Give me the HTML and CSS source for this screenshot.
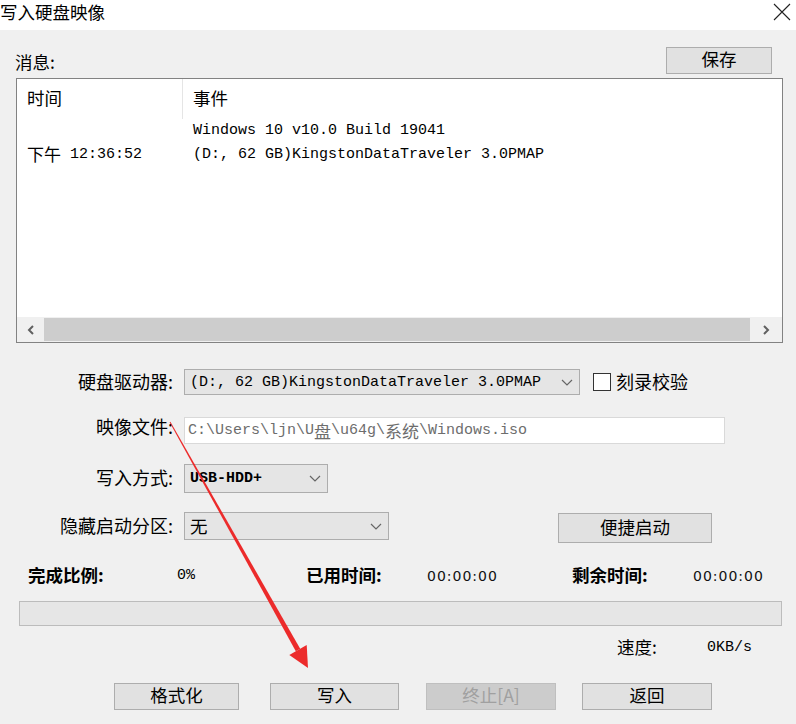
FILE: index.html
```html
<!DOCTYPE html>
<html lang="zh">
<head>
<meta charset="utf-8">
<title>写入硬盘映像</title>
<link rel="stylesheet" href="styles.css">
</head>
<body>
<div class="titlebar">
  <div class="title">写入硬盘映像</div>
  <svg class="close" width="18" height="18" viewBox="0 0 18 18"><path d="M1 1L17 17M17 1L1 17" stroke="#222" stroke-width="1.1" fill="none"/></svg>
</div>

<div class="msg-head">
  <div class="msg-label">消息:</div>
  <div class="btn btn-save">保存</div>
</div>

<div class="list">
  <div class="list-head">
    <div class="col-time">时间</div>
    <div class="col-event">事件</div>
  </div>
  <div class="list-body">
    <div class="list-row">
      <div class="col-time mono"></div>
      <div class="col-event mono">Windows 10 v10.0 Build 19041</div>
    </div>
    <div class="list-row">
      <div class="col-time time-cell"><span class="cjk">下午</span><span class="mono">12:36:52</span></div>
      <div class="col-event mono">(D:, 62 GB)KingstonDataTraveler 3.0PMAP</div>
    </div>
  </div>
  <div class="hscroll">
    <div class="sb-btn sb-left"><svg width="8" height="10" viewBox="0 0 8 10"><path d="M6 1L2 5L6 9" stroke="#606060" stroke-width="2" fill="none"/></svg></div>
    <div class="sb-thumb"></div>
    <div class="sb-btn sb-right"><svg width="8" height="10" viewBox="0 0 8 10"><path d="M2 1L6 5L2 9" stroke="#606060" stroke-width="2" fill="none"/></svg></div>
  </div>
</div>

<div class="form">
  <div class="form-row">
    <div class="label">硬盘驱动器:</div>
    <div class="select select-drive mono"><span>(D:, 62 GB)KingstonDataTraveler 3.0PMAP</span><svg class="chev" width="12" height="7" viewBox="0 0 12 7"><path d="M1 1L6 6L11 1" stroke="#666" stroke-width="1.2" fill="none"/></svg></div>
    <div class="checkbox"></div>
    <div class="check-label">刻录校验</div>
  </div>
  <div class="form-row">
    <div class="label label-file">映像文件:</div>
    <div class="input mono">C:\Users\ljn\U<span class="cjk-w">盘</span>\u64g\<span class="cjk-w">系统</span>\Windows.iso</div>
  </div>
  <div class="form-row">
    <div class="label">写入方式:</div>
    <div class="select select-mode mono bold"><span>USB-HDD+</span><svg class="chev" width="12" height="7" viewBox="0 0 12 7"><path d="M1 1L6 6L11 1" stroke="#666" stroke-width="1.2" fill="none"/></svg></div>
  </div>
  <div class="form-row">
    <div class="label">隐藏启动分区:</div>
    <div class="select select-hide"><span>无</span><svg class="chev" width="12" height="7" viewBox="0 0 12 7"><path d="M1 1L6 6L11 1" stroke="#666" stroke-width="1.2" fill="none"/></svg></div>
    <div class="btn btn-quick">便捷启动</div>
  </div>
</div>

<div class="stats">
  <div class="st st-l1">完成比例:</div>
  <div class="st st-v1 mono">0%</div>
  <div class="st st-l2">已用时间:</div>
  <div class="st st-v2 num">00:00:00</div>
  <div class="st st-l3">剩余时间:</div>
  <div class="st st-v3 num">00:00:00</div>
</div>

<div class="progress"></div>

<div class="speed">
  <div class="speed-label">速度:</div>
  <div class="speed-val mono">0KB/s</div>
</div>

<div class="actions">
  <div class="btn btn-act btn-format">格式化</div>
  <div class="btn btn-act btn-write">写入</div>
  <div class="btn btn-act btn-stop disabled">终止[A]</div>
  <div class="btn btn-act btn-back">返回</div>
</div>

<svg class="annot" width="796" height="724" viewBox="0 0 796 724">
  <polygon points="170.4,421.8 169.6,422.2 295.8,651.2 300.2,648.8" fill="#ec2b2b"/>
  <polygon points="308,668 289.3,654.9 306.7,645" fill="#ec2b2b"/>
</svg>
</body>
</html>
```

FILE: styles.css
```css
* { box-sizing: border-box; }

body {
  margin: 0;
  width: 796px;
  height: 724px;
  overflow: hidden;
  position: relative;
  background: #f0f0f0;
  font-family: "Noto Sans CJK SC", "Microsoft YaHei", sans-serif;
  font-size: 17.5px;
  color: #000;
}

.mono {
  font-family: "Liberation Mono", "Noto Sans CJK SC", monospace;
  font-size: 15px;
}
.cjk { font-family: "Noto Sans CJK SC", sans-serif; font-size: 17px; }
.cjk-w { font-family: "Noto Sans CJK SC", sans-serif; font-size: 17px; }
.bold { font-weight: bold; }
.num {
  font-family: "DejaVu Sans", sans-serif;
  font-size: 14px;
  letter-spacing: 1px;
  color: #111;
}

/* title bar */
.titlebar {
  height: 30px;
  background: #fff;
  display: flex;
  justify-content: space-between;
  align-items: flex-start;
}
.title { line-height: 24px; }
.close { margin: 3px 5px 0 0; }

/* messages */
.msg-head {
  display: flex;
  justify-content: space-between;
  align-items: flex-end;
  padding: 17px 24px 4px 15px;
}
.msg-label { line-height: 20px; padding-bottom: 2px; }

.btn {
  background: #e1e1e1;
  border: 1px solid #adadad;
  display: flex;
  align-items: center;
  justify-content: center;
  line-height: 1;
  padding-bottom: 3px;
}
.btn-save { width: 106px; height: 27px; }

.list {
  margin: 0 13px 0 16px;
  height: 265px;
  border: 1px solid #828282;
  background: #fff;
  display: flex;
  flex-direction: column;
}
.list-head {
  display: flex;
  height: 40px;
  align-items: stretch;
}
.list-head .col-time,
.list-head .col-event { line-height: 38px; }
.col-time { width: 166px; padding-left: 10px; white-space: nowrap; }
.list-head .col-time { border-right: 1px solid #e5e5e5; }
.col-event { padding-left: 10px; white-space: nowrap; }
.list-body { flex: 1; }
.list-row { display: flex; height: 24px; line-height: 24px; }
.time-cell { display: flex; align-items: center; gap: 9px; }
.time-cell .cjk { line-height: 20px; padding-bottom: 2px; }
.time-cell .mono { line-height: 20px; }

.hscroll {
  height: 25px;
  display: flex;
  background: #f0f0f0;
}
.sb-btn { display: flex; align-items: center; justify-content: center; }
.sb-left { width: 27px; }
.sb-right { width: 32px; }
.sb-thumb { flex: 1; background: #cdcdcd; margin: 1px 0; }

/* form */
.form { margin-top: 15px; }
.form-row { display: flex; align-items: center; height: 48px; }
.label { width: 175px; text-align: right; padding-right: 2px; padding-bottom: 3px; flex: none; white-space: nowrap; font-size: 18px; }
.label-file { padding-bottom: 8px; }

.select {
  margin-left: 9px;
  background: #e5e5e5;
  border: 1px solid #adadad;
  display: flex;
  align-items: center;
  justify-content: space-between;
  padding: 0 6px 0 5px;
  white-space: nowrap;
}
.select-drive { width: 396px; height: 26px; }
.select-mode { width: 144px; height: 29px; }
.select-hide { width: 205px; height: 28px; }
.select-hide span { font-size: 17.5px; padding-bottom: 2px; }

.checkbox {
  margin-left: 13px;
  width: 18px;
  height: 18px;
  border: 1px solid #333;
  background: #fff;
}
.check-label { margin-left: 5px; padding-bottom: 3px; font-size: 18px; }

.input {
  margin-left: 9px;
  width: 541px;
  height: 27px;
  background: #fff;
  border: 1px solid #d9d9d9;
  color: #6d6d6d;
  padding-left: 3px;
  display: flex;
  align-items: center;
  white-space: nowrap;
}

.btn-quick { margin-left: 169px; margin-top: 4px; width: 154px; height: 30px; }

/* stats */
.stats { display: flex; align-items: center; height: 51px; padding-left: 28px; }
.st { white-space: nowrap; }
.st-l1, .st-l2, .st-l3 { font-weight: bold; padding-bottom: 3px; }
.st-l1 { width: 149px; }
.st-v1 { width: 129px; }
.st-l2 { width: 121px; }
.st-v2 { width: 145px; }
.st-l3 { width: 121px; }

.progress {
  margin: 0 14px 0 19px;
  height: 25px;
  border: 1px solid #bcbcbc;
  background: #e6e6e6;
}

.speed { display: flex; align-items: center; height: 44px; padding-left: 617px; }
.speed-label { width: 90px; padding-bottom: 4px; }
.speed-val { padding-bottom: 1px; }

.actions { display: flex; margin-top: 13px; }
.btn-act { height: 27px; }
.btn-format { margin-left: 114px; width: 125px; }
.btn-write { margin-left: 31px; width: 129px; }
.btn-stop { margin-left: 27px; width: 130px; }
.btn-back { margin-left: 26px; width: 130px; }
.disabled { background: #cccccc; border-color: #bfbfbf; color: #a0a0a0; }

.annot { position: absolute; left: 0; top: 0; pointer-events: none; }
```
